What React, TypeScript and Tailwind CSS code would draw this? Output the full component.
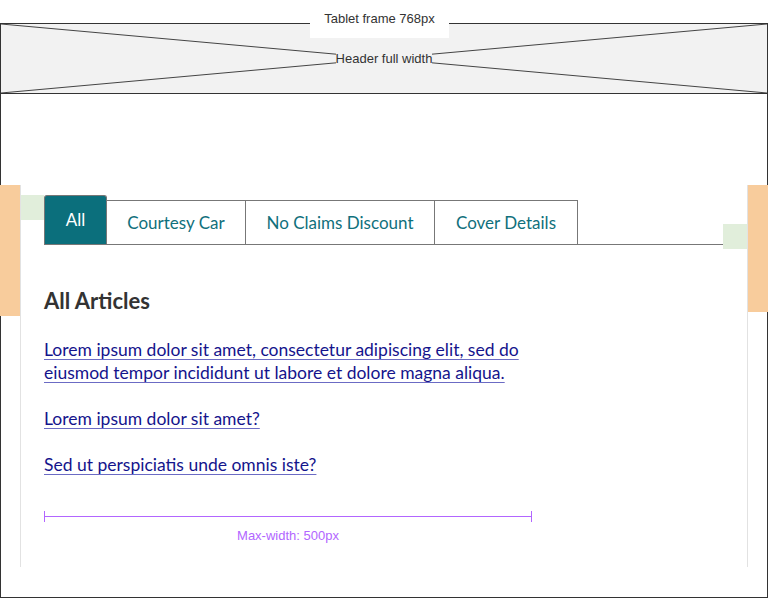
import React from 'react';

const tabs = [
  { id: 'all', label: 'All', w: 'w-[63px]' },
  { id: 'courtesy', label: 'Courtesy Car', w: 'w-[139px]' },
  { id: 'ncd', label: 'No Claims Discount', w: 'w-[189px]' },
  { id: 'cover', label: 'Cover Details', w: 'w-[143px]' },
];

const articles = [
  'Lorem ipsum dolor sit amet, consectetur adipiscing elit, sed do eiusmod tempor incididunt ut labore et dolore magna aliqua.',
  'Lorem ipsum dolor sit amet?',
  'Sed ut perspiciatis unde omnis iste?',
];

export default function App() {
  const active = 'all';

  return (
    <div className="relative w-[768px] h-[599px] bg-white overflow-hidden font-['Liberation_Sans',Arial,sans-serif]">
      {/* frame label */}
      <div className="absolute left-[310px] top-0 w-[139px] h-[38px] bg-white flex items-center justify-center text-[13px] text-[#333] z-10">
        Tablet frame 768px
      </div>

      {/* Tablet frame */}
      <div className="mt-[23px] h-[575px] border border-[#333] flex flex-col">
        {/* Header placeholder */}
        <div className="relative h-[70px] shrink-0 bg-[#f2f2f2] border-b border-[#333] flex items-center justify-center">
          <svg className="absolute inset-0 w-full h-full" viewBox="0 0 766 69" preserveAspectRatio="none">
            <line x1="0" y1="0" x2="766" y2="69" stroke="#444" strokeWidth="1" vectorEffect="non-scaling-stroke" />
            <line x1="766" y1="0" x2="0" y2="69" stroke="#444" strokeWidth="1" vectorEffect="non-scaling-stroke" />
          </svg>
          <span className="relative bg-[#f2f2f2] text-[13px] text-[#333] leading-[15px]">Header full width</span>
        </div>

        {/* Page body */}
        <div className="flex items-start mt-[91px]">
          {/* left gutter */}
          <div className="w-[20px] -ml-px h-[131px] bg-[#f8cc9c] shrink-0" />

          {/* content column */}
          <div className="w-[728px] h-[382px] border-l border-r border-[#e2e2e2] pt-[10px] font-['Lato',sans-serif]">
            <div className="flex items-start">
              <div className="w-[23px] h-[25px] bg-[#e1eedb] shrink-0" />
              <div className="flex-1 flex items-end border-b border-[#777]">
                {tabs.map((t, i) => {
                  const isActive = t.id === active;
                  return (
                    <button
                      key={t.id}
                      className={`${t.w} flex items-center justify-center text-[17px] border-t border-r border-[#777] ${i === 0 ? 'border-l' : ''}
                        ${isActive ? 'h-[49px] bg-[#0b6f7c] text-white rounded-t-[3px]' : 'h-[44px] bg-white text-[#10707c]'}`}
                    >
                      {t.label}
                    </button>
                  );
                })}
              </div>
              <div className="w-[24px] h-[25px] mt-[29px] bg-[#e1eedb] shrink-0" />
            </div>

            <div className="pl-[23px] pr-[24px]">
              <h1 className="mt-[38px] text-[22px] leading-[28px] font-bold text-[#333]">All Articles</h1>

              <div className="max-w-[500px] mt-[23px] flex flex-col gap-[23px]">
                {articles.map((a) => (
                  <a key={a} href="#" className="text-[17.5px] leading-[23px] text-[#14148c] underline decoration-[#6b6bc4] underline-offset-[3px]">
                    {a}
                  </a>
                ))}
              </div>

              {/* max-width annotation */}
              <div className="w-[488px] mt-[35px] flex flex-col items-center">
                <div className="w-full h-[11px] flex items-center border-l border-r border-[#b266ff]">
                  <div className="w-full h-px bg-[#b266ff]" />
                </div>
                <div className="mt-[7px] text-[13px] leading-[14px] text-[#b266ff] font-['Liberation_Sans',Arial,sans-serif]">
                  Max-width: 500px
                </div>
              </div>
            </div>
          </div>

          {/* right gutter */}
          <div className="w-[20px] -mr-px h-[127px] bg-[#f8cc9c] shrink-0" />
        </div>
      </div>
    </div>
  );
}
